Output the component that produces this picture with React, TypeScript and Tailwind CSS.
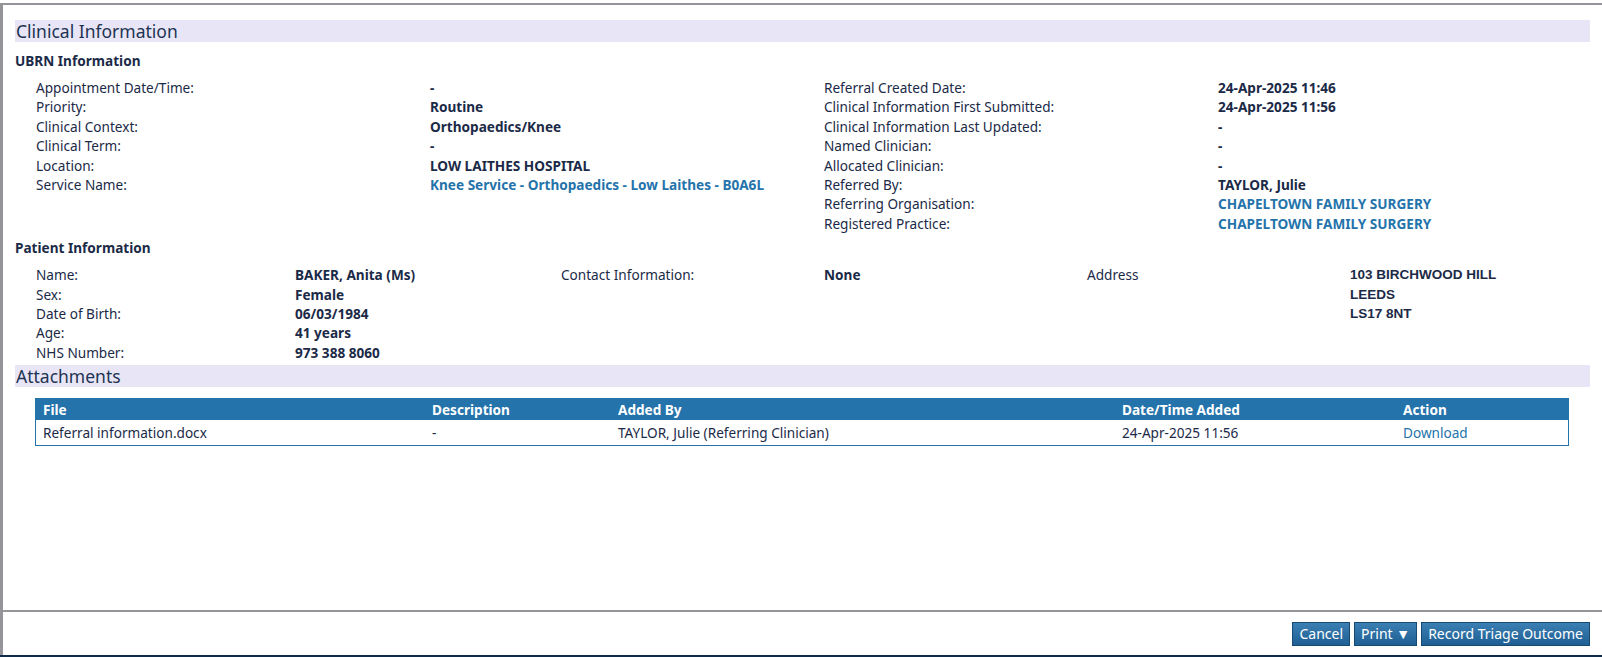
import React from "react";

const F = { fontFamily: '"Noto Sans", "Open Sans", sans-serif' };
const navy = "text-[#1b2a47]";

function Row({ l, v, link }: { l: string; v: string; link?: boolean }) {
  return (
    <>
      <div className="h-[19.4px] leading-[19.4px] whitespace-nowrap">{l}</div>
      <div className={`h-[19.4px] leading-[19.4px] font-bold whitespace-nowrap ${link ? "text-[#2473ab]" : ""}`}>{v}</div>
    </>
  );
}

export default function App() {
  const left = [
    ["Appointment Date/Time:", "-"],
    ["Priority:", "Routine"],
    ["Clinical Context:", "Orthopaedics/Knee"],
    ["Clinical Term:", "-"],
    ["Location:", "LOW LAITHES HOSPITAL"],
    ["Service Name:", "Knee Service - Orthopaedics - Low Laithes - B0A6L", "1"],
  ];
  const right = [
    ["Referral Created Date:", "24-Apr-2025 11:46"],
    ["Clinical Information First Submitted:", "24-Apr-2025 11:56"],
    ["Clinical Information Last Updated:", "-"],
    ["Named Clinician:", "-"],
    ["Allocated Clinician:", "-"],
    ["Referred By:", "TAYLOR, Julie"],
    ["Referring Organisation:", "CHAPELTOWN FAMILY SURGERY", "1"],
    ["Registered Practice:", "CHAPELTOWN FAMILY SURGERY", "1"],
  ];
  const btn =
    "h-[24px] px-[6px] text-[14px] text-white bg-gradient-to-b from-[#3b7fb3] to-[#1f5f93] border border-[#174a72] leading-[22px]";
  const cols = "grid grid-cols-[389px_186px_504px_281px_1fr]";
  return (
    <div style={F} className={`h-[657px] w-[1602px] bg-white flex flex-col text-[13.6px] ${navy} overflow-hidden`}>
      <div className="h-[3px]" />
      <div className="flex-1 flex flex-col border-t-2 border-l-[3px] border-[#959499] min-h-0">
        <div className="flex-1 pl-[12px] pr-[12px] pt-[15px]">
          <div className="h-[22px] bg-[#e8e6f6] pl-[1px] text-[17.5px] leading-[22px] text-[#1e3352]">Clinical Information</div>
          <div className="font-bold mt-[9px] h-[19px] leading-[19px]">UBRN Information</div>
          <div className="flex mt-[8px] pl-[21px]">
            <div className="grid grid-cols-[394px_394px] content-start">
              {left.map((r) => <Row key={r[0]} l={r[0]} v={r[1]} link={!!r[2]} />)}
            </div>
            <div className="grid grid-cols-[394px_300px] content-start">
              {right.map((r) => <Row key={r[0]} l={r[0]} v={r[1]} link={!!r[2]} />)}
            </div>
          </div>
          <div className="font-bold mt-[5px] h-[19px] leading-[19px]">Patient Information</div>
          <div className="flex mt-[8px] pl-[21px]">
            <div className="grid grid-cols-[259px_266px] content-start">
              <Row l="Name:" v="BAKER, Anita (Ms)" />
              <Row l="Sex:" v="Female" />
              <Row l="Date of Birth:" v="06/03/1984" />
              <Row l="Age:" v="41 years" />
              <Row l="NHS Number:" v="973 388 8060" />
            </div>
            <div className="grid grid-cols-[263px_263px] content-start">
              <Row l="Contact Information:" v="None" />
            </div>
            <div className="grid grid-cols-[263px_200px] content-start">
              <div className="leading-[19.4px]">Address</div>
              <div className="font-bold leading-[19.4px] text-[13.5px]" style={{ fontFamily: '"Liberation Sans", Arial, sans-serif' }}>
                <div>103 BIRCHWOOD HILL</div>
                <div>LEEDS</div>
                <div>LS17 8NT</div>
              </div>
            </div>
          </div>
          <div className="h-[22px] mt-[3px] bg-[#e8e6f6] pl-[1px] text-[17.5px] leading-[22px] text-[#1e3352]">Attachments</div>
          <div className="ml-[20px] mr-[21px] mt-[11px] border border-[#2473ab]">
            <div className={`${cols} bg-[#2473ab] text-white font-bold h-[21px] leading-[21px] pl-[7px]`}>
              <div>File</div><div>Description</div><div>Added By</div><div>Date/Time Added</div><div>Action</div>
            </div>
            <div className={`${cols} h-[25px] leading-[25px] pl-[7px]`}>
              <div>Referral information.docx</div><div>-</div><div>TAYLOR, Julie (Referring Clinician)</div><div>24-Apr-2025 11:56</div>
              <div className="text-[#2473ab]">Download</div>
            </div>
          </div>
        </div>
        <div className="h-[45px] border-t-2 border-[#959499] flex justify-end items-start pt-[10px] pr-[12px] gap-[4px]">
          <button className={btn}>Cancel</button>
          <button className={btn}>Print ▼</button>
          <button className={btn}>Record Triage Outcome</button>
        </div>
      </div>
      <div className="h-[2px] bg-[#0f2d4a]" />
    </div>
  );
}
